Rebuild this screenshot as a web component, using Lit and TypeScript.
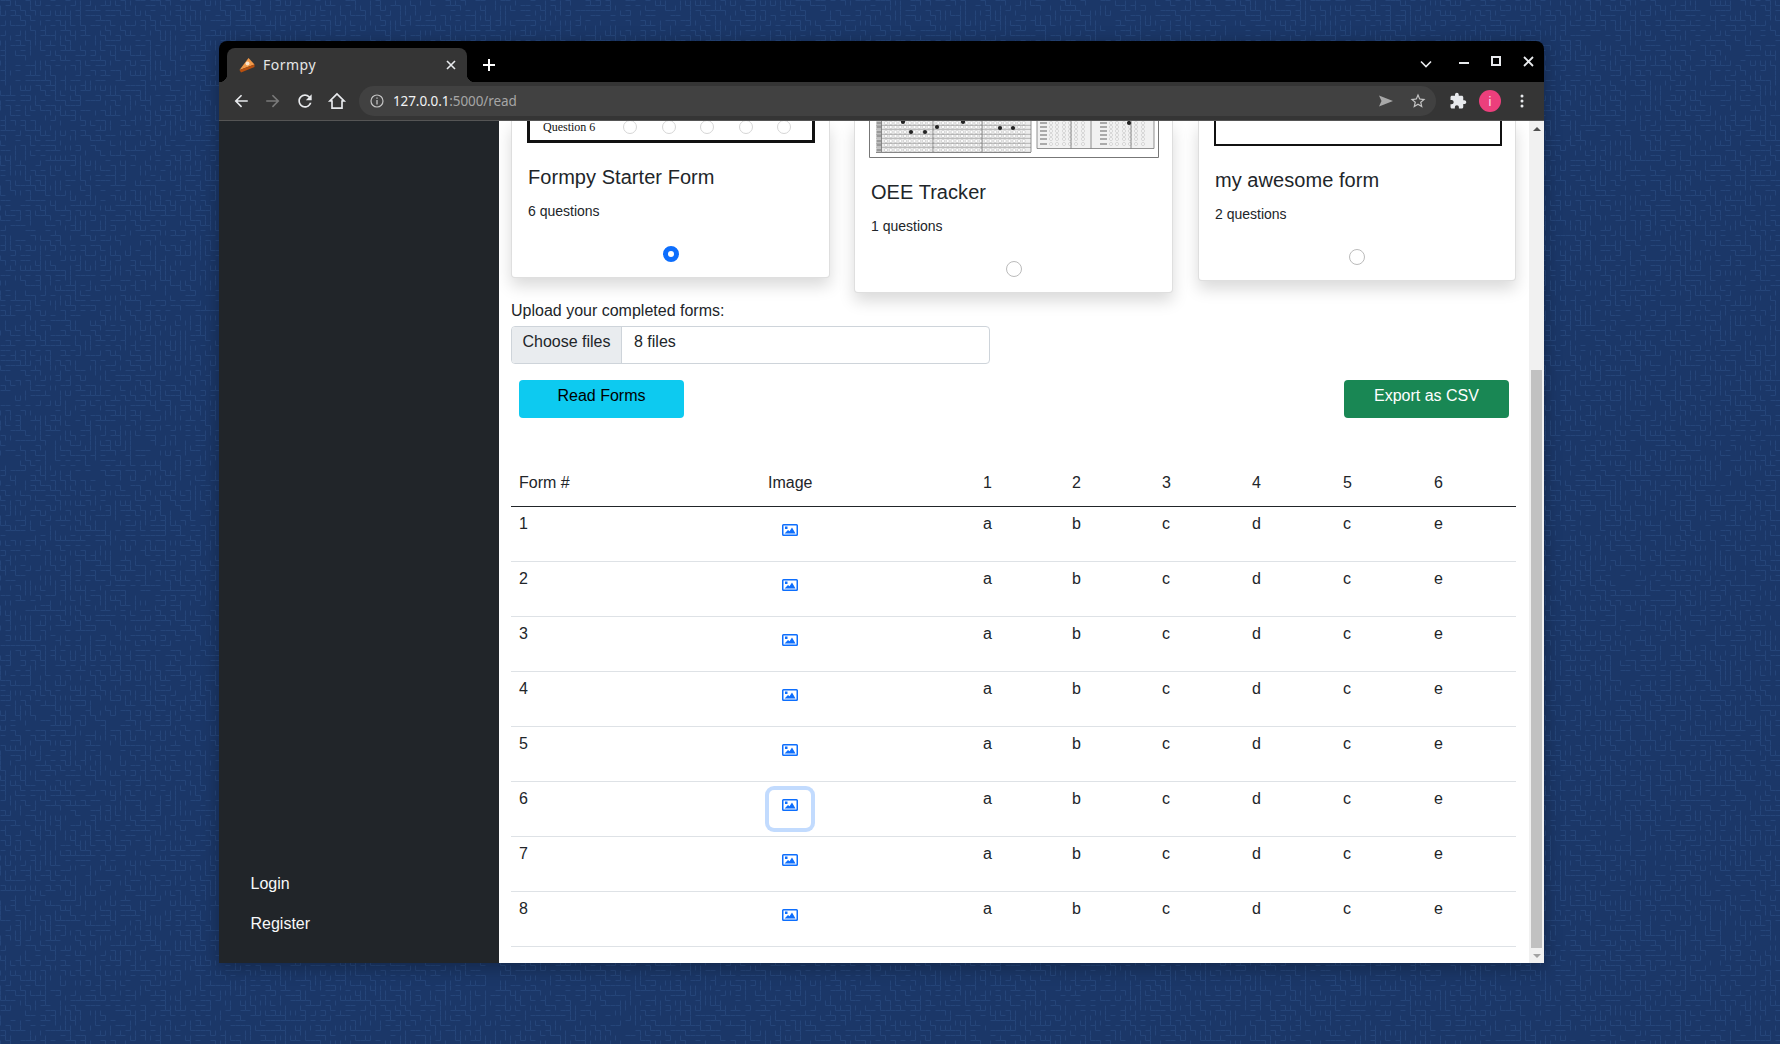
import { LitElement, html, css, svg } from "lit";
import { customElement } from "lit/decorators.js";

function maze(w: number, h: number, cell: number) {
  let s = 12345;
  const rnd = () => ((s = (s * 1664525 + 1013904223) >>> 0) / 4294967296);
  const cols = Math.ceil(w / cell);
  const rows = Math.ceil(h / cell);
  const parts: string[] = [];
  for (let y = 0; y < rows; y++) {
    for (let x = 0; x < cols; x++) {
      const r = rnd();
      const px = x * cell + 0.5;
      const py = y * cell + 0.5;
      if (r < 0.34) parts.push(`M${px} ${py}h${cell}`);
      else if (r < 0.68) parts.push(`M${px} ${py}v${cell}`);
    }
  }
  return parts.join("");
}
const MAZE = maze(1780, 1044, 5);
const ROWS = [1, 2, 3, 4, 5, 6, 7, 8];
const ANSWERS = ["a", "b", "c", "d", "c", "e"];

const sheet = () => {
  const leftRows = [2, 6, 11, 15, 20, 24, 29];
  const xs = Array.from({ length: 30 }, (_, i) => 17 + i * 4.75);
  const dotsL = [[34, 1], [68, 6], [94, 1], [42, 11], [56, 11], [131, 7], [144, 7]];
  const rightRows = [2, 6, 10, 14, 18, 23];
  const rx = [37, 43, 50, 56, 62, 69];
  return svg`<svg class="sheet" width="290" height="37" viewBox="0 0 290 37">
    <path d="M.5 0V36.5H289.5V0" fill="none" stroke="#777"/>
    <rect x="7" y="0" width="155" height="31" fill="#ededed"/>
    ${xs.map((x) => leftRows.map((y) => svg`<circle cx=${x} cy=${y} r="1.6" fill="#fff" stroke="#c8c8c8" stroke-width=".7"/>`))}
    ${leftRows.map((y) => svg`<path d="M7 ${y + 2.3}H162" stroke="#8a8a8a" stroke-width=".6"/><rect x="7.5" y=${y - 1.5} width="5" height="3" fill="#999"/>`)}
    <path d="M12.5 0V31M64 0V31M113 0V31M7 31.500H162M162 0V31" stroke="#777" fill="none" stroke-width=".8"/>
    ${dotsL.map(([x, y]) => svg`<circle cx=${x} cy=${y} r="2.100" fill="#222"/>`)}
    <rect x="168" y="0" width="117" height="27" fill="#f1f1f1"/>
    ${rx.flatMap((x) => rightRows.map((y) => svg`<circle cx=${x + 145} cy=${y} r="1.500" fill="#fff" stroke="#c4c4c4" stroke-width=".7"/><circle cx=${x + 205} cy=${y} r="1.500" fill="#fff" stroke="#c4c4c4" stroke-width=".7"/>`))}
    ${rightRows.map((y) => svg`<rect x="171" y=${y - 1} width="7" height="2" fill="#aaa"/><rect x="231" y=${y - 1} width="7" height="2" fill="#aaa"/>`)}
    <path d="M168 27.500H285M168 0V27.500M285 0V27.500M202 0V27.500M222 0V27.500M262 0V27.500" stroke="#777" fill="none" stroke-width=".8"/>
    <circle cx="260" cy="2" r="2.100" fill="#222"/>
  </svg>`;
};

const imageIcon = html`<svg width="16" height="12" viewBox="0 0 16 12"><rect x=".75" y=".75" width="14.500" height="10.500" rx=".8" fill="#fff" stroke="#0d6efd" stroke-width="1.500"/><rect x="3" y="2.500" width="2.500" height="2.500" fill="#0d6efd"/><path d="M2.500 9.500 6 6l1.500 1.300L10 3.500l3.500 6z" fill="#0d6efd"/></svg>`;

@customElement("app-root")
export class AppRoot extends LitElement {
  static styles = css`
    :host { display: block; width: 1780px; height: 1044px; overflow: hidden; position: relative; background: #1b3768; font-family: "Liberation Sans", Arial, sans-serif; color: #212529; }
    .wallpaper { position: absolute; inset: 0; }
    .window { position: relative; margin: 41px 0 0 219px; width: 1325px; height: 922px; display: flex; flex-direction: column; border-radius: 8px 8px 0 0; overflow: hidden; box-shadow: 0 4px 18px rgba(0,0,0,.3); }

    .strip { height: 41px; background: #000; display: flex; flex: none; color: #e8eaed; }
    .tab { position: relative; margin: 7px 0 0 8px; width: 240px; height: 34px; background: #353535; border-radius: 8px 8px 0 0; display: flex; align-items: center; padding: 0 11px 0 12px; box-sizing: border-box; gap: 8px; }
    .tab::before, .tab::after { content: ""; position: absolute; bottom: 0; width: 8px; height: 8px; }
    .tab::before { left: -8px; background: radial-gradient(circle at 0 0, #000 8px, #353535 8.500px); }
    .tab::after { right: -8px; background: radial-gradient(circle at 100% 0, #000 8px, #353535 8.500px); }
    .tab-title { flex: 1; font: 14px/1 "Noto Sans", sans-serif; letter-spacing: .5px; color: #e6e6e6; }
    .new-tab { margin: 14px 0 0 13px; width: 18px; height: 20px; }
    .controls { margin-left: auto; display: flex; align-items: flex-start; }
    .ctl { width: 32px; height: 41px; display: flex; justify-content: center; }
    .ctl.caret { margin-right: 6px; padding-top: 19px; box-sizing: border-box; }
    .ctl.min { padding-top: 20px; box-sizing: border-box; }
    .ctl.max, .ctl.close { padding-top: 15px; box-sizing: border-box; }

    .toolbar { height: 39px; background: #353535; display: flex; align-items: center; padding-left: 6px; flex: none; border-bottom: 1px solid #555; box-sizing: border-box; }
    .tb { width: 32px; height: 32px; display: flex; align-items: center; justify-content: center; flex: none; }
    .pill { flex: 1; margin: 0 6px; height: 30px; border-radius: 15px; background: #414141; display: flex; align-items: center; padding: 0 2px 0 2px; }
    .url { flex: 1; margin-left: 0; padding-top: 1px; font: 13.500px/1 "Noto Sans", sans-serif; color: #a6a6a6; letter-spacing: -.1px; }
    .url b { font-weight: 400; color: #f1f3f4; }
    .avatar { width: 22px; height: 22px; border-radius: 50%; background: #ec3f7c; color: #fde; font: 13px/22px "Noto Sans", sans-serif; text-align: center; }
    .tb-end { margin-right: 6px; }

    .page { flex: 1; display: flex; min-height: 0; background: #fff; }
    .sidebar { width: 280px; flex: none; background: #212529; color: #f8f9fa; display: flex; flex-direction: column; justify-content: flex-end; padding: 0 0 27px 31.500px; box-sizing: border-box; gap: 16px; font-size: 16px; line-height: 24px; }
    .main { flex: 1; min-width: 0; padding: 0 13px 0 12px; overflow: hidden; }
    .cards { display: flex; align-items: flex-start; }
    .card { width: 319px; flex: none; background: #fff; border: 1px solid rgba(0,0,0,.125); border-top: 0; border-radius: 0 0 4px 4px; box-sizing: border-box; box-shadow: 0 8px 16px rgba(0,0,0,.15); padding: 0 16px 15px; }
    .card.mid { margin-left: 24px; }
    .card.last { width: 318px; margin-left: 25px; }
    .stub { display: block; box-sizing: border-box; background: #fff; }
    .stub.one { height: 22px; margin: 0 -2px 0 -1px; width: 288px; border: 3px solid #111; border-top: 0; display: flex; align-items: center; padding: 1px 0 9px 13px; font: 12px/12px "Liberation Serif", serif; color: #111; }
    .stub.one span { width: 80px; }
    .stub.one i { width: 14px; height: 14px; border: 1px solid #d5d5d5; border-radius: 50%; box-sizing: border-box; margin-right: 24.500px; flex: none; }
    .stub.one i:last-child { margin-right: 0; }
    .stub.three { height: 25px; width: 288px; margin-left: -1px; border: 2px solid #111; border-top: 0; }
    .sheet { display: block; margin-left: -2px; }
    .title { margin: 22px 0 0; font-size: 20px; line-height: 24px; font-weight: 400; letter-spacing: .05px; }
    .count { margin: 12px 0 0; font-size: 14px; line-height: 21px; }
    .radio { display: block; margin: 24px auto 0; width: 16px; height: 16px; border-radius: 50%; box-sizing: border-box; border: 1px solid #bbb; background: #fff; }
    .radio.on { border: 5px solid #0d6efd; }

    .label { margin: 6px 0 3px; font-size: 16px; line-height: 24px; }
    .file { width: 479px; height: 38px; box-sizing: border-box; border: 1px solid #ced4da; border-radius: 4px; display: flex; overflow: hidden; font-size: 16px; line-height: 24px; }
    .file-btn { width: 109px; background: #e9ecef; border-right: 1px solid #ced4da; text-align: center; padding-top: 3px; }
    .file-name { padding: 3px 0 0 12px; }
    .actions { display: flex; justify-content: space-between; margin-top: 16px; padding: 0 7px 0 8px; }
    .btn { width: 165px; height: 38px; border: 0; border-radius: 4px; font: 16px/24px "Liberation Sans", Arial, sans-serif; padding: 0 0 6px; }
    .btn.info { background: #0dcaf0; color: #000; }
    .btn.ok { background: #198754; color: #fff; }

    table { width: 1005px; margin-top: 43px; border-collapse: separate; border-spacing: 0; table-layout: fixed; font-size: 16px; line-height: 24px; }
    .c-form { width: 249px; }
    .c-img { width: 215px; }
    .c-1 { width: 89px; }
    .c-2, .c-3, .c-6 { width: 90px; }
    .c-4, .c-5 { width: 91px; }
    th { height: 46px; box-sizing: border-box; padding: 0 8px 11px; font-weight: 400; text-align: left; vertical-align: bottom; border-bottom: 1px solid #212529; }
    td { height: 55px; box-sizing: border-box; padding: 5px 8px 0; vertical-align: top; border-bottom: 1px solid #dee2e6; }
    .icon-btn { display: block; width: 42px; height: 38px; margin: 3px 0 0 1px; box-sizing: border-box; background: transparent; border: 0; border-radius: 5px; padding: 0 0 8px; line-height: 0; }
    .icon-btn.focus { box-shadow: 0 0 0 4px rgba(13,110,253,.25); }

    .scrollbar { width: 15px; flex: none; background: #f1f1f1; display: flex; flex-direction: column; align-items: center; }
    .sb-btn { height: 15px; flex: none; display: flex; align-items: center; justify-content: center; }
    .up { width: 0; height: 0; border: 4px solid transparent; border-top: 0; border-bottom: 4px solid #505050; }
    .down { width: 0; height: 0; border: 4px solid transparent; border-bottom: 0; border-top: 4px solid #a3a3a3; }
    .track { flex: 1; width: 100%; display: flex; flex-direction: column; padding-top: 234px; box-sizing: border-box; align-items: center; }
    .thumb { flex: 1; width: 11px; background: #c1c1c1; }
  `;

  render() {
    return html`
      <svg class="wallpaper" width="1780" height="1044"><path d=${MAZE} stroke="#254579" stroke-width="1" fill="none"/></svg>
      <div class="window">
        <div class="strip">
          <div class="tab">
            <svg width="16" height="16" viewBox="0 0 16 16"><path d="M.5 13 9.500 1l6 6.500z" fill="#f29a4a"/><path d="M.5 13l15-5.500V10L2 15.500z" fill="#b8500f"/><circle cx="8.500" cy="6.500" r="2" fill="#fbe3c8"/></svg>
            <span class="tab-title">Formpy</span>
            <svg width="10" height="10" viewBox="0 0 10 10"><path d="M1 1l8 8M9 1l-8 8" stroke="#e8eaed" stroke-width="1.600"/></svg>
          </div>
          <svg class="new-tab" viewBox="0 0 18 20"><path d="M9 4v12M3 10h12" stroke="#fff" stroke-width="2"/></svg>
          <div class="controls">
            <div class="ctl caret"><svg width="12" height="8" viewBox="0 0 12 8"><path d="M1 1.500l5 5 5-5" fill="none" stroke="#e8eaed" stroke-width="1.600"/></svg></div>
            <div class="ctl min"><svg width="10" height="4" viewBox="0 0 10 4"><path d="M0 2h10" stroke="#e8eaed" stroke-width="2"/></svg></div>
            <div class="ctl max"><svg width="10" height="10" viewBox="0 0 10 10"><rect x="1" y="1" width="8" height="8" fill="none" stroke="#e8eaed" stroke-width="2"/></svg></div>
            <div class="ctl close"><svg width="11" height="11" viewBox="0 0 11 11"><path d="M1 1l9 9M10 1l-9 9" stroke="#e8eaed" stroke-width="1.800"/></svg></div>
          </div>
        </div>
        <div class="toolbar">
          <div class="tb"><svg width="18" height="18" viewBox="0 0 24 24"><path d="M21 11H7.500l6-6L12 3.500 3.500 12l8.500 8.500 1.500-1.500-6-6H21z" fill="#e8eaed"/></svg></div>
          <div class="tb"><svg width="18" height="18" viewBox="0 0 24 24"><path d="M3 11h13.500l-6-6L12 3.500l8.500 8.500-8.500 8.500-1.500-1.500 6-6H3z" fill="#7a7a7a"/></svg></div>
          <div class="tb"><svg width="20" height="20" viewBox="0 0 24 24"><path d="M17.650 6.350A7.950 7.950 0 0 0 12 4c-4.420 0-7.990 3.580-7.990 8s3.570 8 7.990 8c3.730 0 6.840-2.550 7.730-6h-2.080A5.990 5.990 0 0 1 12 18c-3.310 0-6-2.690-6-6s2.690-6 6-6c1.660 0 3.140.69 4.220 1.780L13 11h7V4l-2.350 2.350z" fill="#e8eaed"/></svg></div>
          <div class="tb"><svg width="20" height="20" viewBox="0 0 24 24"><path d="M12 3.500 3.500 12H6v8.500h12V12h2.500z" fill="none" stroke="#e8eaed" stroke-width="2"/></svg></div>
          <div class="pill">
            <div class="tb"><svg width="14" height="14" viewBox="0 0 14 14"><circle cx="7" cy="7" r="6" fill="none" stroke="#c4c4c4" stroke-width="1.200"/><path d="M7 6v4.500M7 3.400v1.300" stroke="#c4c4c4" stroke-width="1.300"/></svg></div>
            <span class="url"><b>127.0.0.1</b>:5000/read</span>
            <div class="tb"><svg width="16" height="14" viewBox="0 0 16 14"><path d="M1 1.500 15 7 1 12.500 3.500 7z" fill="#a8a8a8"/></svg></div>
            <div class="tb"><svg width="18" height="18" viewBox="0 0 24 24"><path d="M22 9.240l-7.190-.62L12 2 9.190 8.630 2 9.240l5.460 4.730L5.820 21 12 17.270 18.180 21l-1.630-7.030L22 9.240zM12 15.400l-3.760 2.270 1-4.280-3.320-2.880 4.380-.38L12 6.100l1.710 4.040 4.380.38-3.320 2.880 1 4.280L12 15.400z" fill="#c4c4c4"/></svg></div>
          </div>
          <div class="tb"><svg width="18" height="18" viewBox="0 0 24 24"><path d="M20.500 11H19V7c0-1.100-.9-2-2-2h-4V3.500C13 2.120 11.880 1 10.500 1S8 2.120 8 3.500V5H4c-1.100 0-1.990.9-1.990 2v3.800H3.500c1.490 0 2.700 1.210 2.700 2.700s-1.210 2.700-2.700 2.700H2V20c0 1.100.9 2 2 2h3.800v-1.500c0-1.490 1.210-2.700 2.700-2.700 1.490 0 2.700 1.210 2.700 2.700V22H17c1.100 0 2-.9 2-2v-4h1.500c1.380 0 2.500-1.120 2.500-2.500S21.880 11 20.500 11z" fill="#e8eaed"/></svg></div>
          <div class="tb"><div class="avatar">i</div></div>
          <div class="tb tb-end"><svg width="4" height="14" viewBox="0 0 4 14"><circle cx="2" cy="2" r="1.500" fill="#e8eaed"/><circle cx="2" cy="7" r="1.500" fill="#e8eaed"/><circle cx="2" cy="12" r="1.500" fill="#e8eaed"/></svg></div>
        </div>
        <div class="page">
          <aside class="sidebar"><span>Login</span><span>Register</span></aside>
          <main class="main">
            <div class="cards">
              <div class="card">
                <div class="stub one"><span>Question 6</span><i></i><i></i><i></i><i></i><i></i></div>
                <h5 class="title">Formpy Starter Form</h5>
                <p class="count">6 questions</p>
                <span class="radio on"></span>
              </div>
              <div class="card mid">
                ${sheet()}
                <h5 class="title">OEE Tracker</h5>
                <p class="count">1 questions</p>
                <span class="radio"></span>
              </div>
              <div class="card last">
                <div class="stub three"></div>
                <h5 class="title">my awesome form</h5>
                <p class="count">2 questions</p>
                <span class="radio"></span>
              </div>
            </div>
            <div class="label">Upload your completed forms:</div>
            <div class="file"><div class="file-btn">Choose files</div><div class="file-name">8 files</div></div>
            <div class="actions"><button class="btn info">Read Forms</button><button class="btn ok">Export as CSV</button></div>
            <table>
              <colgroup><col class="c-form"/><col class="c-img"/><col class="c-1"/><col class="c-2"/><col class="c-3"/><col class="c-4"/><col class="c-5"/><col class="c-6"/></colgroup>
              <thead><tr><th>Form #</th><th>Image</th>${[1, 2, 3, 4, 5, 6].map((n) => html`<th>${n}</th>`)}</tr></thead>
              <tbody>
                ${ROWS.map((r) => html`<tr>
                  <td>${r}</td>
                  <td><button class="icon-btn ${r === 6 ? "focus" : ""}">${imageIcon}</button></td>
                  ${ANSWERS.map((a) => html`<td>${a}</td>`)}
                </tr>`)}
              </tbody>
            </table>
          </main>
          <div class="scrollbar">
            <div class="sb-btn"><div class="up"></div></div>
            <div class="track"><div class="thumb"></div></div>
            <div class="sb-btn"><div class="down"></div></div>
          </div>
        </div>
      </div>
    `;
  }
}
